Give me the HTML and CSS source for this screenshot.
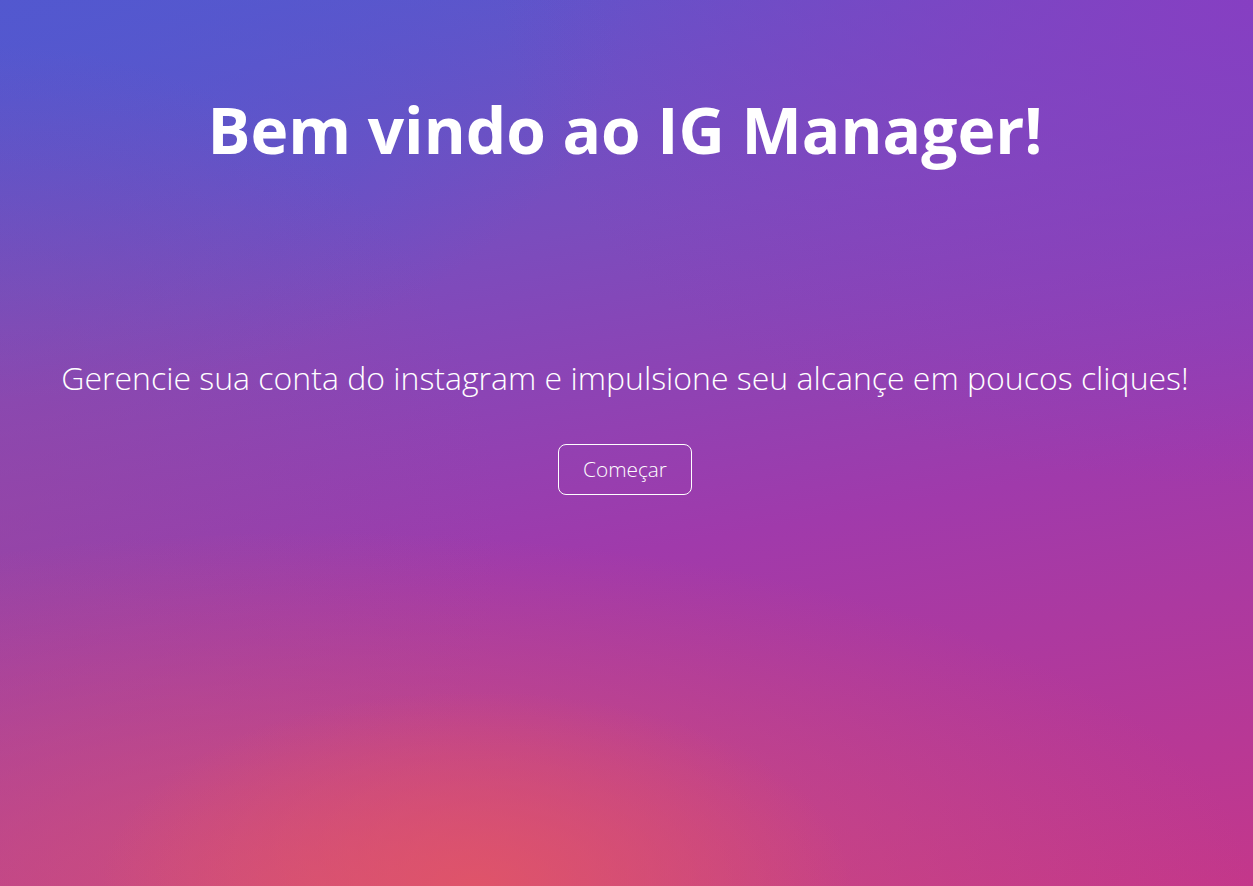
FILE: index.html
```html
<!DOCTYPE html>
<html lang="pt-BR">
<head>
<meta charset="utf-8">
<title>IG Manager</title>
<link rel="stylesheet" href="styles.css">
</head>
<body>
<main class="hero">
  <h1 class="hero-title">Bem vindo ao IG Manager!</h1>
  <p class="hero-lead">Gerencie sua conta do instagram e impulsione seu alcançe em poucos cliques!</p>
  <a class="hero-btn" href="#">Começar</a>
</main>
</body>
</html>
```

FILE: styles.css
```css
html, body {
  margin: 0;
  padding: 0;
  height: 100%;
}
body {
  font-family: "Open Sans", "Noto Sans", sans-serif;
  color: #fff;
  overflow: hidden;
}
.hero {
  min-height: 100vh;
  box-sizing: border-box;
  display: flex;
  flex-direction: column;
  align-items: center;
  text-align: center;
  padding: 92px 3px 0 0;
  background:
    radial-gradient(ellipse 30% 22% at 38% 100%, rgba(228, 86, 100, 0.8), rgba(228, 86, 100, 0)),
    radial-gradient(ellipse 75% 40% at 25% 100%, rgba(212, 82, 118, 0.85), rgba(212, 82, 118, 0)),
    radial-gradient(ellipse 40% 55% at 0% 60%, rgba(150, 72, 160, 0.55), rgba(150, 72, 160, 0)),
    radial-gradient(ellipse 60% 55% at 100% 0%, rgba(137, 61, 194, 0.9), rgba(137, 61, 194, 0)),
    radial-gradient(ellipse 50% 45% at 0% 0%, rgba(82, 88, 207, 0.9), rgba(82, 88, 207, 0)),
    linear-gradient(170deg, #5558cf 0%, #7b4cbd 30%, #a03aab 60%, #c4378a 100%);
}
.hero-title {
  margin: 0;
  font-size: 64px;
  line-height: 1.2;
  font-weight: 700;
}
.hero-lead {
  margin: 190px 0 0;
  font-size: 32px;
  line-height: 1.2;
  font-weight: 300;
}
.hero-btn {
  margin-top: 47px;
  display: inline-block;
  padding: 9px 24px;
  border: 1px solid #fff;
  border-radius: 8px;
  color: #fff;
  text-decoration: none;
  font-size: 20.8px;
  line-height: 1.5;
  font-weight: 300;
}
```
